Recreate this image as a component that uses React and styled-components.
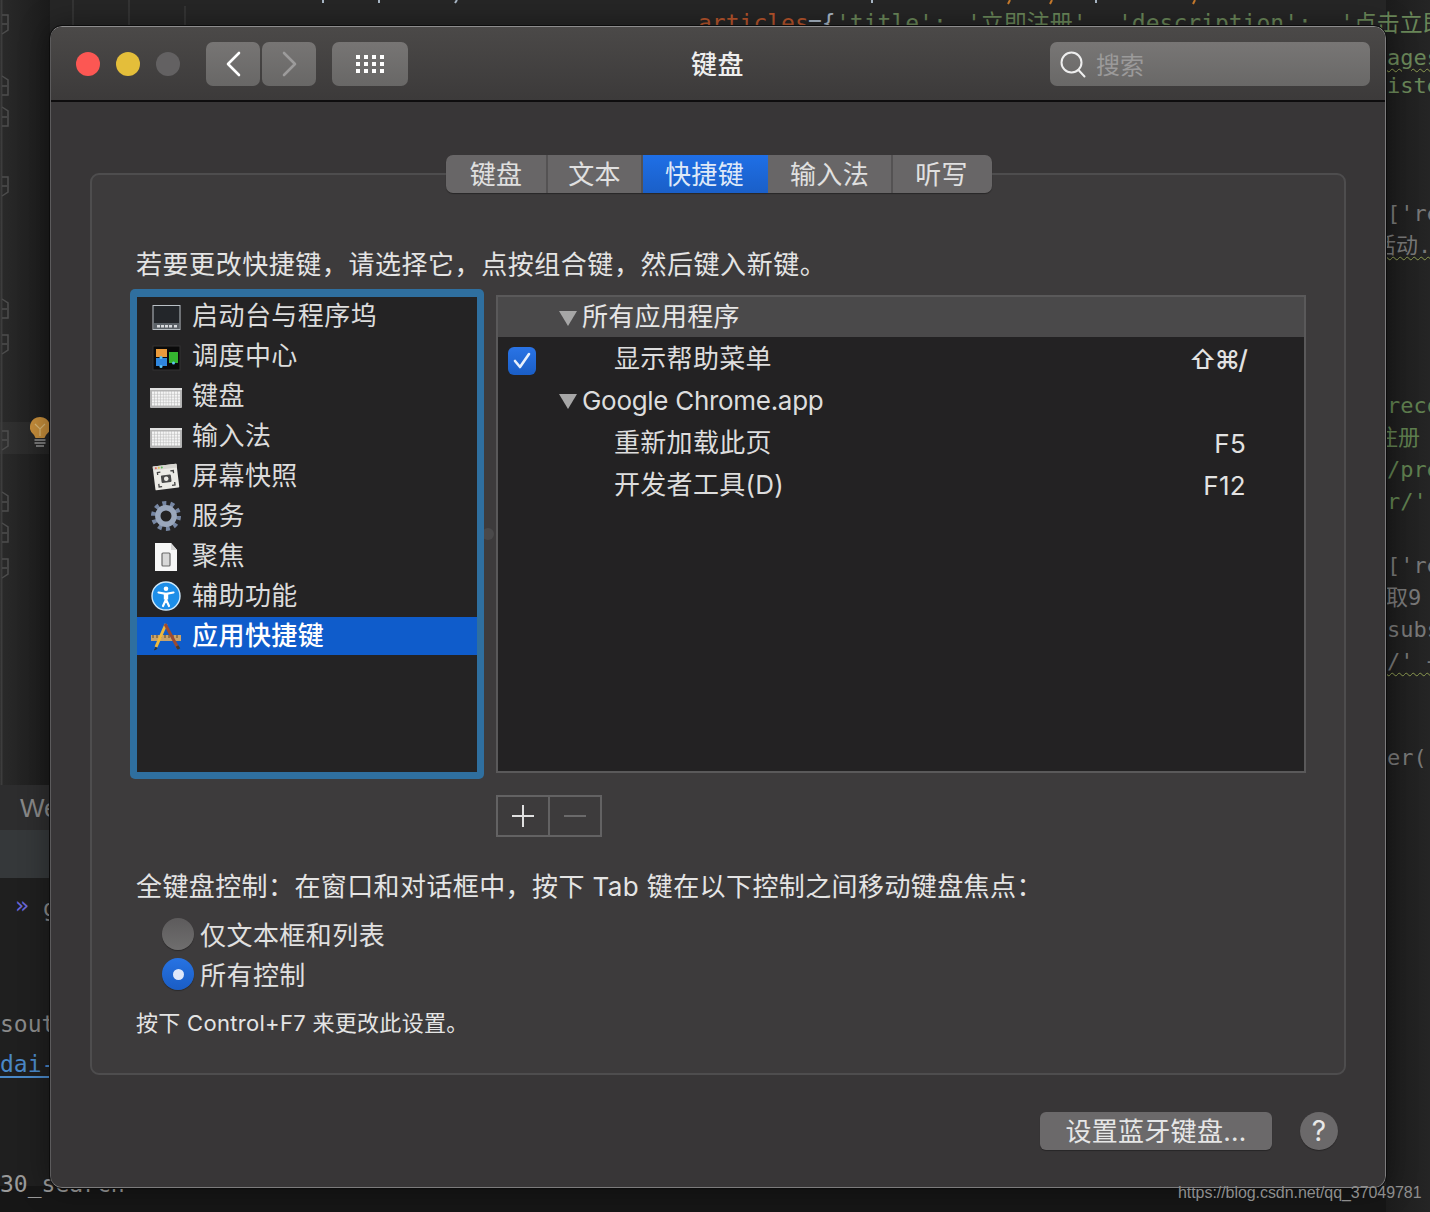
import React from 'react';
import styled, { createGlobalStyle } from 'styled-components';

const CJK = `"Inter", "Noto Sans CJK SC", sans-serif`;

const GlobalStyle = createGlobalStyle`
  html, body {
    margin: 0;
    padding: 0;
    background: #232323;
  }
  body {
    font-family: ${CJK};
    overflow: hidden;
  }
`;

const Desktop = styled.div`
  position: relative;
  width: 1430px;
  height: 1212px;
  overflow: hidden;
  background: #262626;
`;

const Band = styled.div`
  position: absolute;
  left: ${(p) => p.$x}px;
  top: ${(p) => p.$y}px;
  width: ${(p) => p.$w}px;
  height: ${(p) => p.$h}px;
  background: ${(p) => p.$bg};
`;

const Snippet = styled.span`
  position: absolute;
  left: ${(p) => p.$x}px;
  top: ${(p) => p.$y}px;
  font-family: ${(p) =>
    p.$sans
      ? '"Liberation Sans", sans-serif'
      : '"DejaVu Sans Mono", "Noto Sans CJK SC", monospace'};
  font-size: ${(p) => p.$size || 23}px;
  line-height: 32px;
  white-space: pre;
  color: ${(p) => p.$color};
  text-decoration: ${(p) => (p.$wavy ? 'underline wavy #8c9a50 1px' : 'none')};
  text-underline-offset: 3px;
`;

const LinkSnippet = styled(Snippet)`
  text-decoration: underline solid #4a88c7 2px;
  text-underline-offset: 4px;
`;

const Watermark = styled.span`
  position: absolute;
  left: 1178px;
  top: 1183px;
  z-index: 3;
  font-family: "Liberation Sans", sans-serif;
  font-size: 16px;
  line-height: 20px;
  letter-spacing: -0.06px;
  color: #8d8d8d;
`;

const Bulb = styled.svg`
  position: absolute;
  left: 30px;
  top: 417px;
`;

const Decoration = styled.svg`
  position: absolute;
  left: 0;
  top: 0;
`;

const Window = styled.div`
  position: absolute;
  left: 50px;
  top: 26px;
  z-index: 2;
  box-sizing: border-box;
  width: 1336px;
  height: 1162px;
  display: flex;
  flex-direction: column;
  border: 1px solid #7c7b7c;
  border-top-color: #8d8c8d;
  border-left-color: #5c5b5c;
  border-radius: 12px;
  background: #383637;
  outline: 1px solid #0c0c0c;
  box-shadow: 0 0 30px rgba(0, 0, 0, 0.4);
  overflow: hidden;
`;

const TitleBar = styled.header`
  flex: none;
  box-sizing: border-box;
  height: 75px;
  display: flex;
  align-items: center;
  padding: 1px 15px 0 25px;
  border-bottom: 2px solid #0e0d0e;
  background: linear-gradient(180deg, #4b4948 0%, #3c3a3a 100%);
`;

const Lights = styled.div`
  display: flex;
  gap: 16px;
  margin-right: 26px;
`;

const Light = styled.span`
  width: 24px;
  height: 24px;
  border-radius: 50%;
  background: ${(p) => p.$color};
`;

const ToolButton = styled.div`
  width: ${(p) => p.$w}px;
  height: 44px;
  margin-right: ${(p) => p.$gap}px;
  display: flex;
  align-items: center;
  justify-content: center;
  border-radius: 7px;
  background: linear-gradient(180deg, #777574 0%, #686766 100%);
`;

const Title = styled.h1`
  position: absolute;
  left: 0;
  right: 1px;
  top: 20px;
  margin: 0;
  text-align: center;
  font-size: 26px;
  line-height: 36px;
  letter-spacing: 0.4px;
  font-weight: 500;
  color: #eeeeee;
`;

const SearchBox = styled.div`
  box-sizing: border-box;
  width: 320px;
  height: 44px;
  margin-left: auto;
  display: flex;
  align-items: center;
  gap: 10px;
  padding-left: 10px;
  border-radius: 7px;
  background: linear-gradient(180deg, #787675 0%, #696867 100%);
  color: #9b9a9a;
  font-size: 24px;
`;

const SearchLabel = styled.span`
  margin-bottom: 2px;
`;

const Body = styled.main`
  flex: 1;
  box-sizing: border-box;
  display: flex;
  flex-direction: column;
  padding: 53px 39px 0;
`;

const TabBar = styled.nav`
  position: relative;
  z-index: 1;
  align-self: flex-start;
  margin: 0 0 -20px 356px;
  height: 38px;
  display: flex;
  border-radius: 7px;
  overflow: hidden;
  background: #686667;
  box-shadow: 0 1px 1px rgba(0, 0, 0, 0.35);
`;

const Tab = styled.div`
  box-sizing: border-box;
  width: ${(p) => p.$w}px;
  padding-bottom: 4px;
  display: flex;
  align-items: center;
  justify-content: center;
  font-size: 26px;
  letter-spacing: 0.3px;
  color: ${(p) => (p.$active ? '#dfe9f8' : '#e0e0e0')};
  background: ${(p) =>
    p.$active ? 'linear-gradient(180deg, #1f6fe6 0%, #1a5fc8 100%)' : 'transparent'};
  border-right: 2px solid ${(p) => (p.$plain ? 'transparent' : '#545253')};
`;

const Panel = styled.section`
  box-sizing: border-box;
  width: 1256px;
  height: 902px;
  display: flex;
  flex-direction: column;
  padding: 0 39px 0 38px;
  border: 2px solid #4e4d4e;
  border-radius: 9px;
  background: #3d3b3c;
`;

const Hint = styled.p`
  margin: ${(p) => p.$top}px 0 0 6px;
  font-size: ${(p) => p.$size}px;
  line-height: 36px;
  letter-spacing: ${(p) => p.$spacing}px;
  color: #e4e4e4;
  white-space: nowrap;
`;

const Columns = styled.div`
  position: relative;
  display: flex;
  margin-top: 6px;
`;

const ListFrame = styled.div`
  position: relative;
  z-index: 1;
  box-sizing: border-box;
  width: 354px;
  height: 490px;
  flex: none;
  margin-right: 12px;
  padding: 8px 7px 7px;
  border-radius: 5px;
  background: #2f6f9f;
`;

const List = styled.ul`
  height: 100%;
  margin: 0;
  padding: 0;
  list-style: none;
  background: #242324;
  display: flex;
  flex-direction: column;
  gap: 2px;
`;

const ListRow = styled.li`
  height: 38px;
  display: flex;
  align-items: center;
  gap: 10px;
  padding-left: 13px;
  font-size: 26px;
  letter-spacing: 0.45px;
  font-weight: ${(p) => (p.$selected ? 500 : 400)};
  color: ${(p) => (p.$selected ? '#ffffff' : '#dcdcdc')};
  background: ${(p) => (p.$selected ? '#0f5ccb' : 'transparent')};
`;

const ListLabel = styled.span`
  margin-bottom: 6px;
`;

const IconSlot = styled.span`
  width: 32px;
  height: 32px;
  flex: none;
  display: flex;
  align-items: center;
  justify-content: center;
  margin-top: ${(p) => p.$drop || 0}px;
`;

const RightColumn = styled.div`
  display: flex;
  flex-direction: column;
  margin-top: 6px;
`;

const Outline = styled.div`
  box-sizing: border-box;
  width: 810px;
  height: 478px;
  border: 2px solid #5a595a;
  background: #232223;
`;

const Splitter = styled.span`
  position: absolute;
  left: 352px;
  top: 239px;
  width: 12px;
  height: 12px;
  border-radius: 50%;
  background: #4a494a;
`;

const OutlineRow = styled.div`
  box-sizing: border-box;
  height: ${(p) => (p.$head ? 40 : 42)}px;
  display: flex;
  align-items: center;
  padding-right: 58px;
  font-size: 26px;
  letter-spacing: 0.3px;
  color: ${(p) => (p.$head ? '#e6e6e6' : '#dddddd')};
  background: ${(p) => (p.$head ? '#4a494a' : 'transparent')};
`;

const Check = styled.span`
  width: 28px;
  height: 28px;
  flex: none;
  margin: 6px 0 0 10px;
  display: flex;
  align-items: center;
  justify-content: center;
  border-radius: 6px;
  background: linear-gradient(180deg, #2a74e6 0%, #1a5ec6 100%);
`;

const RowLabel = styled.span`
  margin-left: ${(p) => p.$indent || 0}px;
  margin-bottom: ${(p) => p.$lift || 0}px;
  letter-spacing: ${(p) => (p.$latin ? -0.3 : 0.3)}px;
`;

const Triangle = styled.span`
  width: 0;
  height: 0;
  flex: none;
  margin: 2px 5px 0 61px;
  border-left: 9px solid transparent;
  border-right: 9px solid transparent;
  border-top: 15px solid #a6a6a6;
`;

const Shortcut = styled.span`
  margin: 2px 0 0 auto;
  color: #e2e2e2;
  letter-spacing: ${(p) => (p.$tight ? -1.9 : 0.3)}px;
  font-weight: ${(p) => (p.$tight ? 500 : 400)};
`;

const AddRemove = styled.div`
  box-sizing: border-box;
  width: 106px;
  height: 42px;
  margin-top: 22px;
  display: flex;
  border: 2px solid #636263;
`;

const AddRemoveCell = styled.div`
  flex: 1;
  display: flex;
  align-items: center;
  justify-content: center;
  border-right: ${(p) => (p.$divider ? '2px solid #636263' : 'none')};
`;

const RadioGroup = styled.div`
  display: flex;
  flex-direction: column;
  gap: 8px;
  margin: 13px 0 0 32px;
`;

const RadioRow = styled.div`
  display: flex;
  align-items: center;
  gap: 6px;
  height: 32px;
  font-size: 26px;
  letter-spacing: 0.45px;
  color: #e0e0e0;
`;

const RadioLabel = styled.span`
  margin-bottom: 1px;
`;

const Radio = styled.span`
  width: 32px;
  height: 32px;
  display: flex;
  align-items: center;
  justify-content: center;
  border-radius: 50%;
  background: ${(p) =>
    p.$on
      ? 'linear-gradient(180deg, #2773e3 0%, #1a5dc5 100%)'
      : 'linear-gradient(180deg, #5d5b5c 0%, #6f6e6e 100%)'};
  box-shadow: 0 1px 1px rgba(0, 0, 0, 0.3);
`;

const RadioDot = styled.span`
  width: 11px;
  height: 11px;
  border-radius: 50%;
  background: #dfe8fa;
`;

const Footer = styled.footer`
  display: flex;
  justify-content: flex-end;
  align-items: center;
  gap: 28px;
  margin: 37px 8px 0 0;
`;

const BluetoothButton = styled.div`
  width: 232px;
  height: 38px;
  padding-bottom: 4px;
  box-sizing: border-box;
  display: flex;
  align-items: center;
  justify-content: center;
  border-radius: 6px;
  background: #6b696a;
  font-size: 26px;
  letter-spacing: 0.3px;
  color: #e6e6e6;
  box-shadow: 0 1px 1px rgba(0, 0, 0, 0.3);
`;

const HelpButton = styled.div`
  width: 38px;
  height: 38px;
  display: flex;
  align-items: center;
  justify-content: center;
  border-radius: 50%;
  background: #6b696a;
  font-size: 28px;
  color: #e8e8e8;
  box-shadow: 0 1px 1px rgba(0, 0, 0, 0.3);
`;

const LaunchpadIcon = () => (
  <svg width="32" height="28" viewBox="0 0 32 28">
    <rect x="3" y="2.5" width="27" height="24" fill="#23262a" stroke="#b9c0c5" strokeWidth="1" />
    <rect x="4" y="20" width="25" height="6" fill="#5c6268" />
    {[7, 11, 15, 19, 24].map((x) => (
      <rect key={x} x={x} y="22" width="3" height="2.5" fill="#d8dadd" />
    ))}
  </svg>
);

const MissionIcon = () => (
  <svg width="32" height="28" viewBox="0 0 32 28">
    <rect x="3" y="3" width="27" height="24" fill="#0a0a0a" stroke="#333" strokeWidth="1" />
    <rect x="6" y="6" width="11" height="8" fill="#e89a3c" />
    <rect x="6" y="15" width="11" height="8" fill="#2f86dd" />
    <rect x="19" y="9" width="9" height="11" fill="#35b52f" />
    <circle cx="11" cy="14.5" r="1.5" fill="#5cc3f2" />
    <circle cx="11" cy="23.5" r="1.5" fill="#5cc3f2" />
    <circle cx="23.5" cy="20" r="1.5" fill="#5cc3f2" />
  </svg>
);

const KeyboardIcon = () => (
  <svg width="32" height="20" viewBox="0 0 32 20">
    <rect x="0" y="0" width="32" height="20" rx="1" fill="#b4b4b4" />
    <rect x="0" y="0" width="32" height="2" fill="#e0e0e0" />
    {[0, 1, 2, 3, 4].map((row) =>
      Array.from({ length: 10 }).map((_, col) => (
        <rect
          key={`${row}-${col}`}
          x={2 + col * 2.85}
          y={3.5 + row * 2.9}
          width="2.4"
          height="2.4"
          fill="#f4f4f4"
        />
      ))
    )}
  </svg>
);

const ScreenshotIcon = () => (
  <svg width="32" height="30" viewBox="0 0 32 30">
    <g transform="rotate(-7 16 15)">
      <rect x="4" y="3" width="24" height="24" rx="1" fill="#ecebe6" />
      <rect x="4" y="3" width="24" height="4" fill="#d6d5d0" />
      <circle cx="7" cy="5" r="1" fill="#e0685e" />
      <circle cx="10" cy="5" r="1" fill="#e2c04e" />
      <circle cx="13" cy="5" r="1" fill="#5cb85c" />
      <path d="M8 12v-2.5h3M21 9.5h3V12M24 21v3h-3M11 24H8v-3" fill="none" stroke="#444" strokeWidth="1.3" />
      <rect x="11" y="13" width="10" height="7.5" rx="1" fill="#4a4a4a" />
      <circle cx="16" cy="16.8" r="2.3" fill="#ecebe6" />
    </g>
  </svg>
);

const GearIcon = () => (
  <svg width="32" height="32" viewBox="0 0 32 32">
    <circle cx="16" cy="16" r="12.5" fill="none" stroke="#7787a3" strokeWidth="5" strokeDasharray="3.9 3.95" />
    <circle cx="16" cy="16" r="8.2" fill="none" stroke="#9aa7bc" strokeWidth="5.4" />
  </svg>
);

const DocumentIcon = () => (
  <svg width="32" height="30" viewBox="0 0 32 30">
    <path d="M5 1h16l6 7v21H5z" fill="#f7f7f7" />
    <path d="M21 1l6 7h-6z" fill="#d5d5d5" />
    <rect x="12" y="11" width="8" height="13" rx="1" fill="#d8d8d8" stroke="#6a6a6a" strokeWidth="1.2" />
  </svg>
);

const AccessIcon = () => (
  <svg width="32" height="30" viewBox="0 0 32 30">
    <circle cx="16" cy="15" r="14" fill="#1d8ee8" stroke="#cfe9fb" strokeWidth="1.4" />
    <circle cx="16" cy="7.8" r="2.3" fill="#ffffff" />
    <path d="M8.5 11.5l7.5 1.4 7.5-1.4M16 12.9v5.5M16 18.4l-3 6.6M16 18.4l3 6.6" fill="none" stroke="#ffffff" strokeWidth="2.2" strokeLinecap="round" strokeLinejoin="round" />
    <rect x="13.8" y="12.5" width="4.4" height="6" fill="#ffffff" />
  </svg>
);

const ToolsIcon = () => (
  <svg width="32" height="30" viewBox="0 0 32 30">
    <rect x="1" y="14" width="30" height="6" fill="#c9a36a" />
    <path d="M3 14v3M7 14v3M11 14v3M15 14v3M19 14v3M23 14v3M27 14v3" stroke="#5e4526" strokeWidth="1" />
    <path d="M16 3L6 26" stroke="#f0b93c" strokeWidth="3" />
    <path d="M6 26l-1.5 3 2.8-1.6" fill="#333" stroke="#333" />
    <path d="M15 3l13 24" stroke="#9c4a32" strokeWidth="3" />
    <path d="M27 25l2 3" stroke="#4b3a2b" strokeWidth="3" />
  </svg>
);

const CATEGORIES = [
  { label: '启动台与程序坞', Icon: LaunchpadIcon, drop: 2 },
  { label: '调度中心', Icon: MissionIcon, drop: 2 },
  { label: '键盘', Icon: KeyboardIcon, drop: 4 },
  { label: '输入法', Icon: KeyboardIcon, drop: 4 },
  { label: '屏幕快照', Icon: ScreenshotIcon, drop: 2 },
  { label: '服务', Icon: GearIcon },
  { label: '聚焦', Icon: DocumentIcon, drop: 2 },
  { label: '辅助功能', Icon: AccessIcon },
  { label: '应用快捷键', Icon: ToolsIcon, selected: true },
];

const TABS = [
  { label: '键盘', w: 102 },
  { label: '文本', w: 95 },
  { label: '快捷键', w: 125, active: true, plain: true },
  { label: '输入法', w: 125 },
  { label: '听写', w: 99, plain: true },
];

const GREEN = '#6a8759';
const DIM_GREEN = '#5f7f4f';
const GREY = '#777777';

const SNIPPETS = [
  { x: 698, y: 7, color: '#b8552c', text: 'articles' },
  { x: 808, y: 7, color: '#a9b7c6', text: '={' },
  { x: 836, y: 7, color: GREEN, text: "'title':" },
  { x: 967, y: 7, color: GREEN, text: "'立即注册'," },
  { x: 1118, y: 7, color: GREEN, text: "'description':" },
  { x: 1340, y: 7, color: GREEN, text: "'点击立即" },
  { x: 1387, y: 42, color: GREEN, text: 'ages', wavy: true, size: 22 },
  { x: 1387, y: 70, color: GREEN, text: 'iste', size: 22 },
  { x: 1387, y: 198, color: GREY, text: "['re", size: 22 },
  { x: 1374, y: 230, color: GREY, text: '活动.', wavy: true, size: 22 },
  { x: 1387, y: 390, color: DIM_GREEN, text: 'reco', size: 22 },
  { x: 1376, y: 422, color: DIM_GREEN, text: '注册', size: 22 },
  { x: 1387, y: 454, color: DIM_GREEN, text: '/pre', size: 22 },
  { x: 1387, y: 486, color: DIM_GREEN, text: "r/'", size: 22 },
  { x: 1387, y: 550, color: GREY, text: "['re", size: 22 },
  { x: 1386, y: 582, color: GREY, text: '取9', size: 22 },
  { x: 1387, y: 614, color: GREY, text: 'subs', size: 22 },
  { x: 1387, y: 646, color: GREY, text: "/' +", wavy: true, size: 22 },
  { x: 1387, y: 742, color: GREY, text: 'er()', size: 22 },
  { x: 20, y: 792, color: '#888888', text: 'We', sans: true, size: 26 },
  { x: 43, y: 892, color: '#888888', text: 'g' },
  { x: 0, y: 1008, color: '#8a8a8a', text: 'sout' },
  { x: 0, y: 1168, color: '#9a9a9a', text: '30_search' },
];

// fold markers in the editor gutter: up = closing fold, points upward
const FOLDS = [
  { y: 15 },
  { y: 76, up: true },
  { y: 107, up: true },
  { y: 177 },
  { y: 299, up: true },
  { y: 335 },
  { y: 431 },
  { y: 492, up: true },
  { y: 523, up: true },
  { y: 559 },
];

const foldPath = ({ y, up }) =>
  up
    ? `M2 ${y}l6 4v15h-6M2 ${y + 10}h5`
    : `M2 ${y}h6v15l-6 4M2 ${y + 9}h5`;

function Backdrop() {
  return (
    <>
      <Band $x={0} $y={0} $w={50} $h={790} $bg="linear-gradient(90deg, #2a2a2a 0%, #1b1b1b 100%)" />
      <Band $x={0} $y={422} $w={50} $h={32} $bg="rgba(255, 255, 255, 0.04)" />
      <Band $x={0} $y={785} $w={50} $h={45} $bg="#2d2d2e" />
      <Band $x={0} $y={830} $w={50} $h={48} $bg="#35383a" />
      <Band $x={0} $y={878} $w={50} $h={334} $bg="#1f1f1f" />
      <Band $x={0} $y={1186} $w={1430} $h={26} $bg="#161616" />
      <Band $x={1386} $y={0} $w={44} $h={1212} $bg="linear-gradient(90deg, #1c1c1c 0%, #252525 100%)" />
      <Decoration width="50" height="790" viewBox="0 0 50 790">
        <path d="M1.5 0V785" stroke="#3d3d3d" strokeWidth="2" />
        {FOLDS.map((fold) => (
          <path key={fold.y} d={foldPath(fold)} fill="none" stroke="#4d4d4d" strokeWidth="1.5" />
        ))}
      </Decoration>
      <Decoration width="1430" height="27" viewBox="0 0 1430 27">
        <path d="M73 0v27M129 0v27M185 6v21" stroke="#3a3a3a" strokeWidth="1.5" />
        <path d="M323 0v3M379 0v3M457 0l-2 3M872 0v3M1096 0v3" stroke="#a9b7c6" strokeWidth="2" />
        <path d="M1010 0l-2 4M1052 0l-2 4M1195 0l-2 4" stroke="#c77a2c" strokeWidth="2" />
      </Decoration>
      <Bulb width="20" height="30" viewBox="0 0 20 30">
        <path d="M10 0a10 10 0 0 0-6 18l1.5 3h9l1.5-3a10 10 0 0 0-6-18z" fill="#c48c3a" />
        <path d="M5 7l5 5 5-5M10 12v7" fill="none" stroke="#d8b776" strokeWidth="1.2" />
        <path d="M4.5 22h11v2h-11zM4.5 25h11v2h-11zM6 28h8v2H6z" fill="#767676" />
      </Bulb>
      {SNIPPETS.map((s) => (
        <Snippet key={`${s.x}-${s.y}`} $x={s.x} $y={s.y} $color={s.color} $wavy={s.wavy} $size={s.size} $sans={s.sans}>
          {s.text}
        </Snippet>
      ))}
      <Snippet $x={15} $y={889} $color="#6a66d8">»</Snippet>
      <LinkSnippet $x={0} $y={1048} $color="#4a88c7">dai-</LinkSnippet>
      <Watermark>https://blog.csdn.net/qq_37049781</Watermark>
    </>
  );
}

function Toolbar() {
  return (
    <TitleBar>
      <Lights>
        <Light $color="#fc5753" />
        <Light $color="#e4be3a" />
        <Light $color="#636162" />
      </Lights>
      <ToolButton $w={54} $gap={2}>
        <svg width="18" height="28" viewBox="0 0 18 28">
          <path d="M15 3L4 14l11 11" fill="none" stroke="#ffffff" strokeWidth="2.6" strokeLinecap="round" strokeLinejoin="round" />
        </svg>
      </ToolButton>
      <ToolButton $w={54} $gap={16}>
        <svg width="18" height="28" viewBox="0 0 18 28">
          <path d="M4 3l11 11L4 25" fill="none" stroke="#9c9b9b" strokeWidth="2.6" strokeLinecap="round" strokeLinejoin="round" />
        </svg>
      </ToolButton>
      <ToolButton $w={76} $gap={0}>
        <svg width="28" height="18" viewBox="0 0 28 18">
          {[0, 7, 14].map((y) =>
            [0, 8, 16, 24].map((x) => <rect key={`${x}-${y}`} x={x} y={y} width="4" height="4" fill="#ffffff" />)
          )}
        </svg>
      </ToolButton>
      <Title>键盘</Title>
      <SearchBox>
        <svg width="26" height="28" viewBox="0 0 26 28">
          <circle cx="11.5" cy="12.5" r="10" fill="none" stroke="#eeeeee" strokeWidth="2" />
          <path d="M18.5 20l6 6.5" stroke="#eeeeee" strokeWidth="2" strokeLinecap="round" />
        </svg>
        <SearchLabel>搜索</SearchLabel>
      </SearchBox>
    </TitleBar>
  );
}

function ShortcutOutline() {
  return (
    <Outline>
      <OutlineRow $head>
        <Triangle />
        <RowLabel $lift={6}>所有应用程序</RowLabel>
      </OutlineRow>
      <OutlineRow>
        <Check>
          <svg width="20" height="18" viewBox="0 0 20 18">
            <path d="M3 9l5 6 9-13" fill="none" stroke="#e8f0fc" strokeWidth="2.6" strokeLinecap="round" strokeLinejoin="round" />
          </svg>
        </Check>
        <RowLabel $indent={78} $lift={4}>显示帮助菜单</RowLabel>
        <Shortcut $tight>⇧⌘/</Shortcut>
      </OutlineRow>
      <OutlineRow>
        <Triangle />
        <RowLabel $latin>Google Chrome.app</RowLabel>
      </OutlineRow>
      <OutlineRow>
        <RowLabel $indent={116} $lift={4}>重新加载此页</RowLabel>
        <Shortcut>F5</Shortcut>
      </OutlineRow>
      <OutlineRow>
        <RowLabel $indent={116} $lift={4}>开发者工具(D)</RowLabel>
        <Shortcut>F12</Shortcut>
      </OutlineRow>
    </Outline>
  );
}

export default function App() {
  return (
    <Desktop>
      <GlobalStyle />
      <Backdrop />
      <Window>
        <Toolbar />
        <Body>
          <TabBar>
            {TABS.map((tab) => (
              <Tab key={tab.label} $w={tab.w} $active={tab.active} $plain={tab.plain}>
                {tab.label}
              </Tab>
            ))}
          </TabBar>
          <Panel>
            <Hint $top={72} $size={26} $spacing={0.55}>若要更改快捷键，请选择它，点按组合键，然后键入新键。</Hint>
            <Columns>
              <Splitter />
              <ListFrame>
                <List>
                  {CATEGORIES.map(({ label, Icon, drop, selected }) => (
                    <ListRow key={label} $selected={selected}>
                      <IconSlot $drop={drop}>
                        <Icon />
                      </IconSlot>
                      <ListLabel>{label}</ListLabel>
                    </ListRow>
                  ))}
                </List>
              </ListFrame>
              <RightColumn>
                <ShortcutOutline />
                <AddRemove>
                  <AddRemoveCell $divider>
                    <svg width="24" height="24" viewBox="0 0 24 24">
                      <path d="M12 1v22M1 12h22" stroke="#e0e0e0" strokeWidth="2" />
                    </svg>
                  </AddRemoveCell>
                  <AddRemoveCell>
                    <svg width="24" height="24" viewBox="0 0 24 24">
                      <path d="M1 12h22" stroke="#6b6a6b" strokeWidth="2" />
                    </svg>
                  </AddRemoveCell>
                </AddRemove>
              </RightColumn>
            </Columns>
            <Hint $top={32} $size={26} $spacing={0.4}>全键盘控制：在窗口和对话框中，按下 Tab 键在以下控制之间移动键盘焦点：</Hint>
            <RadioGroup>
              <RadioRow>
                <Radio />
                <RadioLabel>仅文本框和列表</RadioLabel>
              </RadioRow>
              <RadioRow>
                <Radio $on>
                  <RadioDot />
                </Radio>
                <RadioLabel>所有控制</RadioLabel>
              </RadioRow>
            </RadioGroup>
            <Hint $top={15} $size={22} $spacing={0.3}>按下 Control+F7 来更改此设置。</Hint>
          </Panel>
          <Footer>
            <BluetoothButton>设置蓝牙键盘...</BluetoothButton>
            <HelpButton>?</HelpButton>
          </Footer>
        </Body>
      </Window>
    </Desktop>
  );
}
